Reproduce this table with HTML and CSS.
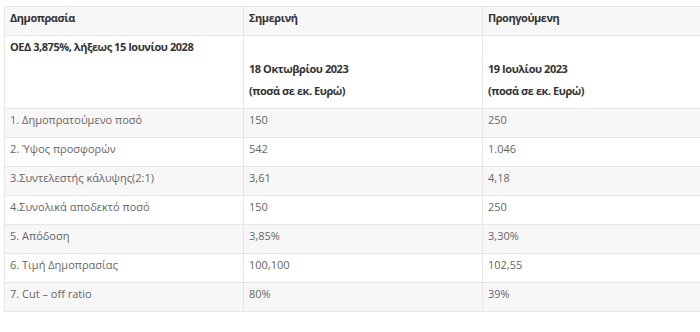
FILE: index.html
```html
<!DOCTYPE html>
<html lang="el">
<head>
<meta charset="utf-8">
<link rel="stylesheet" href="styles.css">
</head>
<body>
<div class="wrap">
<table class="auction">
  <colgroup>
    <col class="c1"><col class="c2"><col class="c3">
  </colgroup>
  <thead>
    <tr><th>Δημοπρασία</th><th>Σημερινή</th><th>Προηγούμενη</th></tr>
  </thead>
  <tbody>
    <tr class="bold">
      <td>ΟΕΔ 3,875%, λήξεως 15 Ιουνίου 2028</td>
      <td><br>18 Οκτωβρίου 2023<br>(ποσά σε εκ. Ευρώ)</td>
      <td><br>19 Ιουλίου 2023<br>(ποσά σε εκ. Ευρώ)</td>
    </tr>
    <tr class="alt"><td>1. Δημοπρατούμενο ποσό</td><td>150</td><td>250</td></tr>
    <tr><td>2. Ύψος προσφορών</td><td>542</td><td>1.046</td></tr>
    <tr class="alt"><td>3.Συντελεστής κάλυψης(2:1)</td><td>3,61</td><td>4,18</td></tr>
    <tr><td>4.Συνολικά αποδεκτό ποσό</td><td>150</td><td>250</td></tr>
    <tr class="alt"><td>5. Απόδοση</td><td>3,85%</td><td>3,30%</td></tr>
    <tr><td>6. Τιμή Δημοπρασίας</td><td>100,100</td><td>102,55</td></tr>
    <tr class="alt"><td>7. Cut – off ratio</td><td>80%</td><td>39%</td></tr>
  </tbody>
</table>
</div>
</body>
</html>
```
FILE: styles.css
```css
html, body {
  margin: 0;
  padding: 0;
  background: #fff;
}
.wrap {
  padding: 6px 0 0 4px;
  overflow: hidden;
}
.auction {
  border-collapse: collapse;
  table-layout: fixed;
  width: 720px;
  font-family: "Open Sans", "Noto Sans", sans-serif;
  font-size: 11px;
  line-height: 22px;
  color: #666;
}
.c1 { width: 239px; }
.c2 { width: 239px; }
.auction th, .auction td {
  border: 1px solid #e6e6e6;
  padding: 0 5px 6px;
  text-align: left;
  vertical-align: top;
}
.auction th {
  background: #f7f7f7;
  color: #333;
  font-weight: 700;
  letter-spacing: -0.45px;
}
.auction tr.bold td {
  color: #333;
  font-weight: 700;
  letter-spacing: -0.45px;
}
.auction tr.alt td {
  background: #f7f7f7;
}
```
